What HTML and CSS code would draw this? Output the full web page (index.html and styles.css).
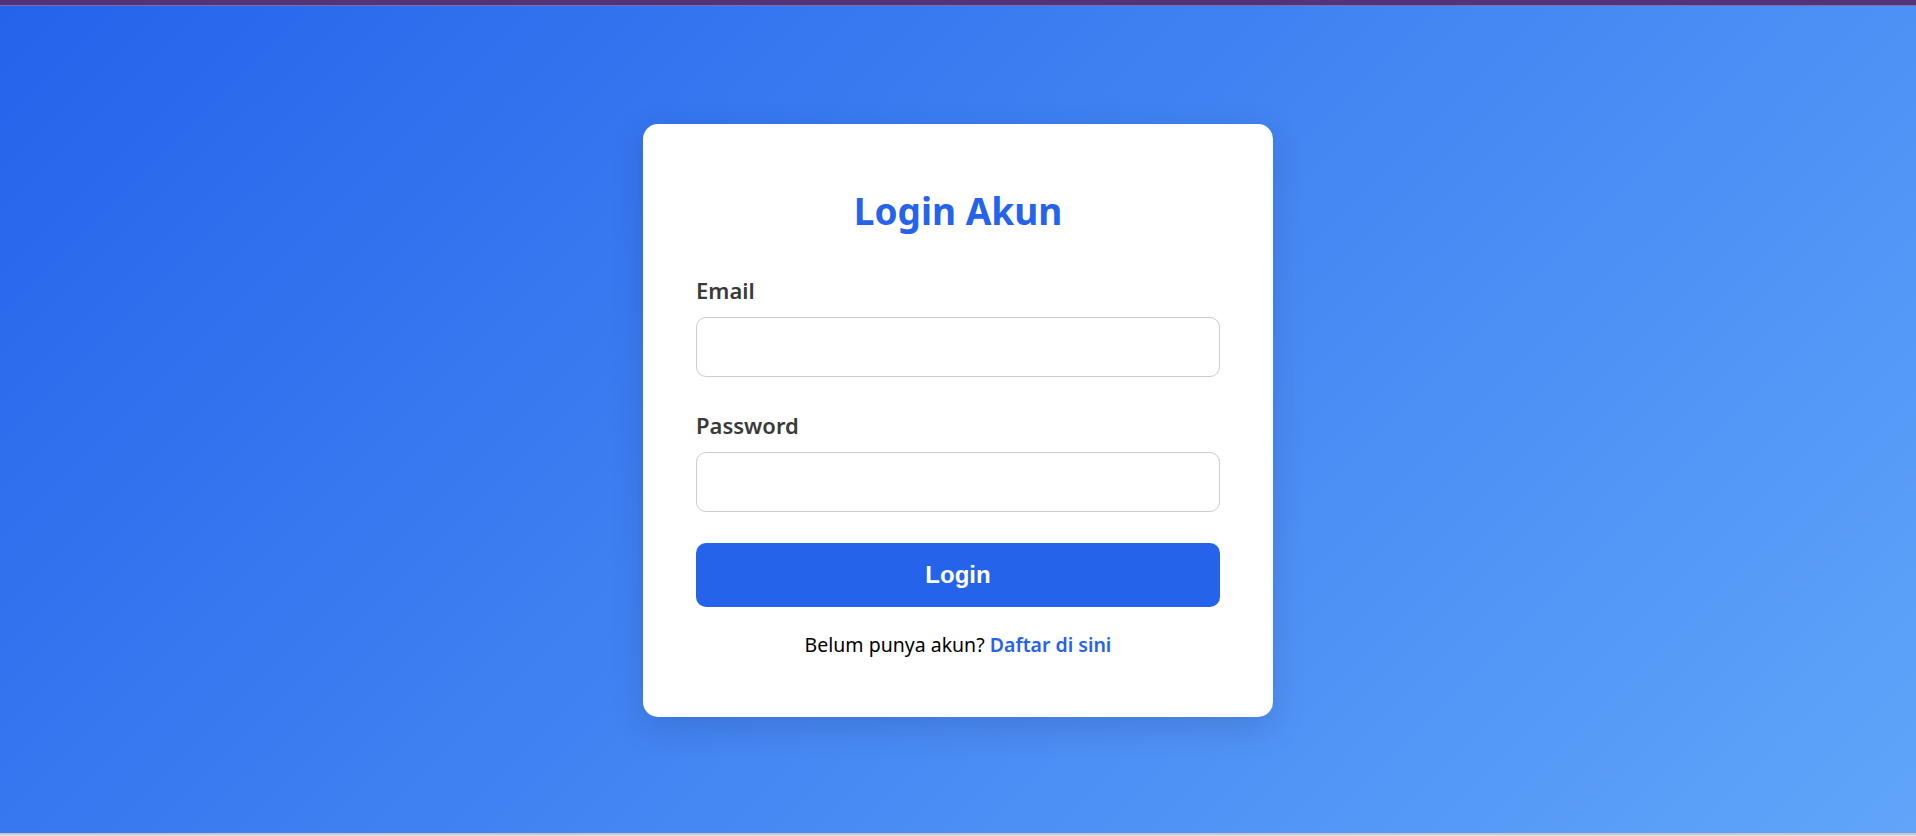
FILE: index.html
```html
<!DOCTYPE html>
<html lang="id">
<head>
<meta charset="utf-8">
<title>Login Akun</title>
<link rel="stylesheet" href="styles.css">
</head>
<body>
<div class="frame-top"></div>
<main class="stage">
  <div class="card">
    <h2 class="title">Login Akun</h2>
    <form class="form">
      <div class="field">
        <label class="label" for="email">Email</label>
        <input class="input" id="email" type="email">
      </div>
      <div class="field">
        <label class="label" for="password">Password</label>
        <input class="input" id="password" type="password">
      </div>
      <button class="btn" type="button">Login</button>
    </form>
    <p class="footer">Belum punya akun? <a class="link" href="#">Daftar di sini</a></p>
  </div>
</main>
<div class="frame-bottom"></div>
</body>
</html>
```

FILE: styles.css
```css
* { box-sizing: border-box; }

html, body {
  height: 100%;
}

body {
  margin: 0;
  display: flex;
  flex-direction: column;
  font-family: "Noto Sans", "Open Sans", sans-serif;
  background: #2563eb;
}

.frame-top {
  height: 6px;
  background: #54327a;
  border-bottom: 1px solid #8a6aa6;
  flex: none;
}

.stage {
  flex: 1;
  display: flex;
  align-items: center;
  justify-content: center;
  padding-top: 2px;
  background: linear-gradient(135deg, #2563eb 0%, #60a5fa 100%);
}

.frame-bottom {
  height: 3px;
  flex: none;
  background: #c9c9c9;
  border-bottom: 1px solid #e4e4e4;
}

.card {
  width: 630px;
  background: #ffffff;
  border-radius: 15px;
  padding: 63px 53px 58px;
  box-shadow: 0 10px 32px rgba(20, 40, 90, 0.18);
}

.title {
  margin: 0 0 40px;
  text-align: center;
  color: #2563eb;
  font-size: 37px;
  line-height: 48px;
  font-weight: 700;
}

.form {
  display: flex;
  flex-direction: column;
}

.field {
  display: flex;
  flex-direction: column;
}

.field + .field {
  margin-top: 33px;
}

.label {
  font-size: 22px;
  line-height: 30px;
  font-weight: 600;
  color: #3a3a3a;
  margin-bottom: 12px;
}

.input {
  height: 60px;
  width: 100%;
  border: 1px solid #cccccc;
  border-radius: 10px;
  background: #ffffff;
  font-size: 20px;
  padding: 0 14px;
}

.btn {
  margin-top: 31px;
  height: 64px;
  width: 100%;
  border: none;
  border-radius: 10px;
  background: #2563eb;
  color: #ffffff;
  font-family: "Liberation Sans", Arial, sans-serif;
  font-size: 24px;
  font-weight: 700;
  cursor: pointer;
}

.footer {
  margin: 24px 0 0;
  text-align: center;
  font-size: 19.5px;
  line-height: 28px;
  color: #000000;
}

.link {
  color: #2563eb;
  font-weight: 600;
  text-decoration: none;
}
```
